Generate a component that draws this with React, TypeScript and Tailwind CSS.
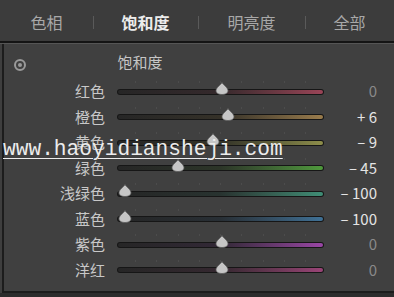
import React from 'react'

interface Row {
  label: string
  value: number
  track: string
}

const ROWS: Row[] = [
  { label: '红色', value: 0, track: 'bg-gradient-to-r from-[#262626] via-[#35292c] to-[#9a4457]' },
  { label: '橙色', value: 6, track: 'bg-gradient-to-r from-[#262626] via-[#353128] to-[#9a7c4c]' },
  { label: '黄色', value: -9, track: 'bg-gradient-to-r from-[#262626] via-[#333328] to-[#8e8e4a]' },
  { label: '绿色', value: -45, track: 'bg-gradient-to-r from-[#262626] via-[#2c3528] to-[#4f9a3c]' },
  { label: '浅绿色', value: -100, track: 'bg-gradient-to-r from-[#262626] via-[#283330] to-[#3f8e76]' },
  { label: '蓝色', value: -100, track: 'bg-gradient-to-r from-[#262626] via-[#282f35] to-[#3f7196]' },
  { label: '紫色', value: 0, track: 'bg-gradient-to-r from-[#262626] via-[#322836] to-[#9a46a6]' },
  { label: '洋红', value: 0, track: 'bg-gradient-to-r from-[#262626] via-[#352830] to-[#9a4477]' },
]

const TABS = [
  { label: '色相', w: 'w-[93px]', active: false },
  { label: '饱和度', w: 'w-[105px]', active: true },
  { label: '明亮度', w: 'w-[107px]', active: false },
  { label: '全部', w: 'flex-1', active: false },
]

function fmt(v: number) {
  if (v === 0) return '0'
  return v > 0 ? `+ ${v}` : `– ${Math.abs(v)}`
}

function Thumb() {
  return (
    <svg width="14" height="13" viewBox="0 0 14 13">
      <path
        d="M7 0.5 C8 2.8 13 5.5 13 8.7 C13 11 10.6 12.5 7 12.5 C3.4 12.5 1 11 1 8.7 C1 5.5 6 2.8 7 0.5 Z"
        fill="#c6c6c6"
        stroke="#5a5a5a"
        strokeWidth="0.8"
      />
    </svg>
  )
}

function Slider({ row }: { row: Row }) {
  // track 207px wide, 0 sits near the middle
  const left = 105 + row.value * 0.97
  return (
    <div className="relative w-[207px] h-full flex items-center">
      <div className="absolute left-0 right-0 top-[3px] flex justify-between px-[18px]">
        {Array.from({ length: 9 }).map((_, i) => (
          <span key={i} className="w-px h-[2px] bg-[#4c4c4c]" />
        ))}
      </div>
      <div className="w-full h-[6px] rounded-full bg-[#161616] p-[1px] mt-[2px]">
        <div className={`w-full h-full rounded-full ${row.track}`} />
      </div>
      <div className="absolute top-[4px] -translate-x-1/2" style={{ left }}>
        <Thumb />
      </div>
    </div>
  )
}

export default function App() {
  return (
    <div
      className="relative w-[394px] h-[297px] bg-[#3e3e3e] overflow-hidden"
      style={{ fontFamily: '"Noto Sans CJK SC", "Noto Sans", sans-serif' }}
    >
      {/* Tabs */}
      <div className="h-[41px] flex items-center bg-[#3c3c3c]">
        {TABS.map((t, i) => (
          <div key={t.label} className={`${t.w} h-full flex items-center relative`}>
            {i > 0 && <span className="absolute left-0 top-[16px] w-px h-[13px] bg-[#5a5a5a]" />}
            <span
              className={`w-full text-center text-[16px] pt-[3px] ${
                t.active ? 'text-[#ececec] font-bold' : 'text-[#a8a8a8]'
              }`}
            >
              {t.label}
            </span>
          </div>
        ))}
      </div>
      <div className="h-[2px] bg-[#141414]" />
      <div className="h-px bg-[#555]" />

      {/* Panel */}
      <div className="ml-[2px] border-l-2 border-[#1c1c1c] h-[249px] border-b-2 border-b-[#1c1c1c] bg-[#404040]">
        <div className="h-[34px] flex items-center relative">
          <span className="absolute left-[10px] top-[15px] w-[12px] h-[12px] rounded-full border-2 border-[#9a9a9a] flex items-center justify-center">
            <span className="w-[4px] h-[4px] rounded-full bg-[#9a9a9a]" />
          </span>
          <span className="w-[272px] text-center text-[15px] text-[#c6c6c6] pt-[2px]">饱和度</span>
        </div>
        {ROWS.map(row => (
          <div key={row.label} className="h-[25.5px] flex items-center">
            <span className="w-[101px] text-right text-[15px] text-[#c8c8c8] leading-none">{row.label}</span>
            <span className="w-[12px]" />
            <Slider row={row} />
            <span
              className={`w-[53px] text-right text-[15px] leading-none ${
                row.value === 0 ? 'text-[#8a8a8a]' : 'text-[#e4e4e4]'
              }`}
            >
              {fmt(row.value)}
            </span>
          </div>
        ))}
      </div>
      <div className="bg-[#2c2c2c] h-[5px]" />

      {/* Watermark */}
      <div
        className="absolute left-[3px] top-[139px] text-[21.2px] text-[#ececec] underline underline-offset-[3px] decoration-1 leading-none"
        style={{ fontFamily: '"Liberation Mono", monospace' }}
      >
        www.haoyidiansheji.com
      </div>
    </div>
  )
}
